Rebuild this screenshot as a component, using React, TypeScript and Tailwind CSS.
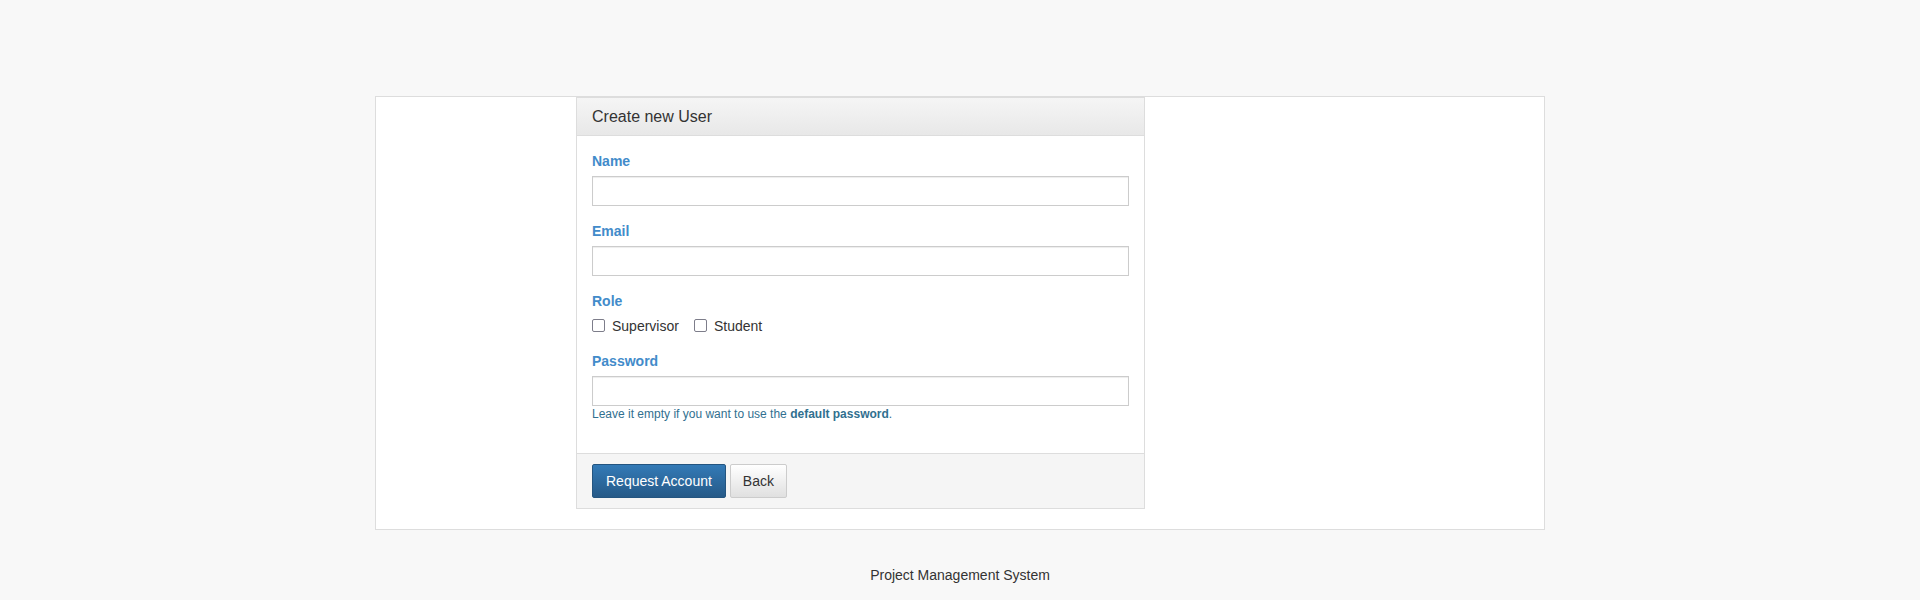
import React from 'react';

const Field: React.FC<{ label: string; type?: string; children?: React.ReactNode }> = ({ label, type = 'text', children }) => (
  <div className="mb-[15px]">
    <label className="block font-bold text-[#428bca] mb-[5px]">{label}</label>
    <input
      type={type}
      className="block w-full h-[30px] px-[12px] bg-white border border-[#ccc] shadow-[inset_0_1px_1px_rgba(0,0,0,0.075)] outline-none"
    />
    {children}
  </div>
);

const Check: React.FC<{ label: string }> = ({ label }) => (
  <label className="inline-flex items-center mr-[15px]">
    <span className="inline-block w-[13px] h-[13px] border border-[#7d7d8a] rounded-[2px] bg-white" />
    <span className="ml-[7px]">{label}</span>
  </label>
);

const App: React.FC = () => {
  return (
    <div className="min-h-[600px] bg-[#f8f8f8] pt-[96px] font-['Liberation_Sans',Arial,sans-serif] text-[14px] leading-[20px] text-[#333]">
      {/* Page container */}
      <div className="w-[1170px] mx-auto bg-white border border-[#ddd]">
        <div className="ml-[200px] w-[569px] mb-[20px] border border-[#ddd] bg-white">
          {/* Heading */}
          <div className="px-[15px] pt-[10px] pb-[9px] bg-linear-to-b from-[#f5f5f5] to-[#e8e8e8] border-b border-[#ddd]">
            <h3 className="text-[16px] leading-[17.6px] text-[#333]">Create new User</h3>
          </div>

          {/* Body */}
          <div className="p-[15px]">
            <Field label="Name" />
            <Field label="Email" type="email" />
            <div className="mb-[15px]">
              <label className="block font-bold text-[#428bca] mb-[5px]">Role</label>
              <div className="flex items-center">
                <Check label="Supervisor" />
                <Check label="Student" />
              </div>
            </div>
            <Field label="Password" type="password">
              <p className="mt-0 text-[12px] leading-[17px] text-[#31708f]">
                Leave it empty if you want to use the <b>default password</b>.
              </p>
            </Field>
          </div>

          {/* Footer */}
          <div className="px-[15px] py-[10px] bg-[#f5f5f5] border-t border-[#ddd] flex items-center gap-[4px]">
            <button className="h-[34px] px-[13px] text-white border border-[#245580] rounded-[2px] bg-linear-to-b from-[#337ab7] to-[#265a88]">
              Request Account
            </button>
            <button className="h-[34px] px-[12px] text-[#333] border border-[#ccc] rounded-[2px] bg-linear-to-b from-white to-[#e0e0e0]">
              Back
            </button>
          </div>
        </div>
      </div>

      <p className="mt-[35px] text-center">Project Management System</p>
    </div>
  );
};

export default App;
